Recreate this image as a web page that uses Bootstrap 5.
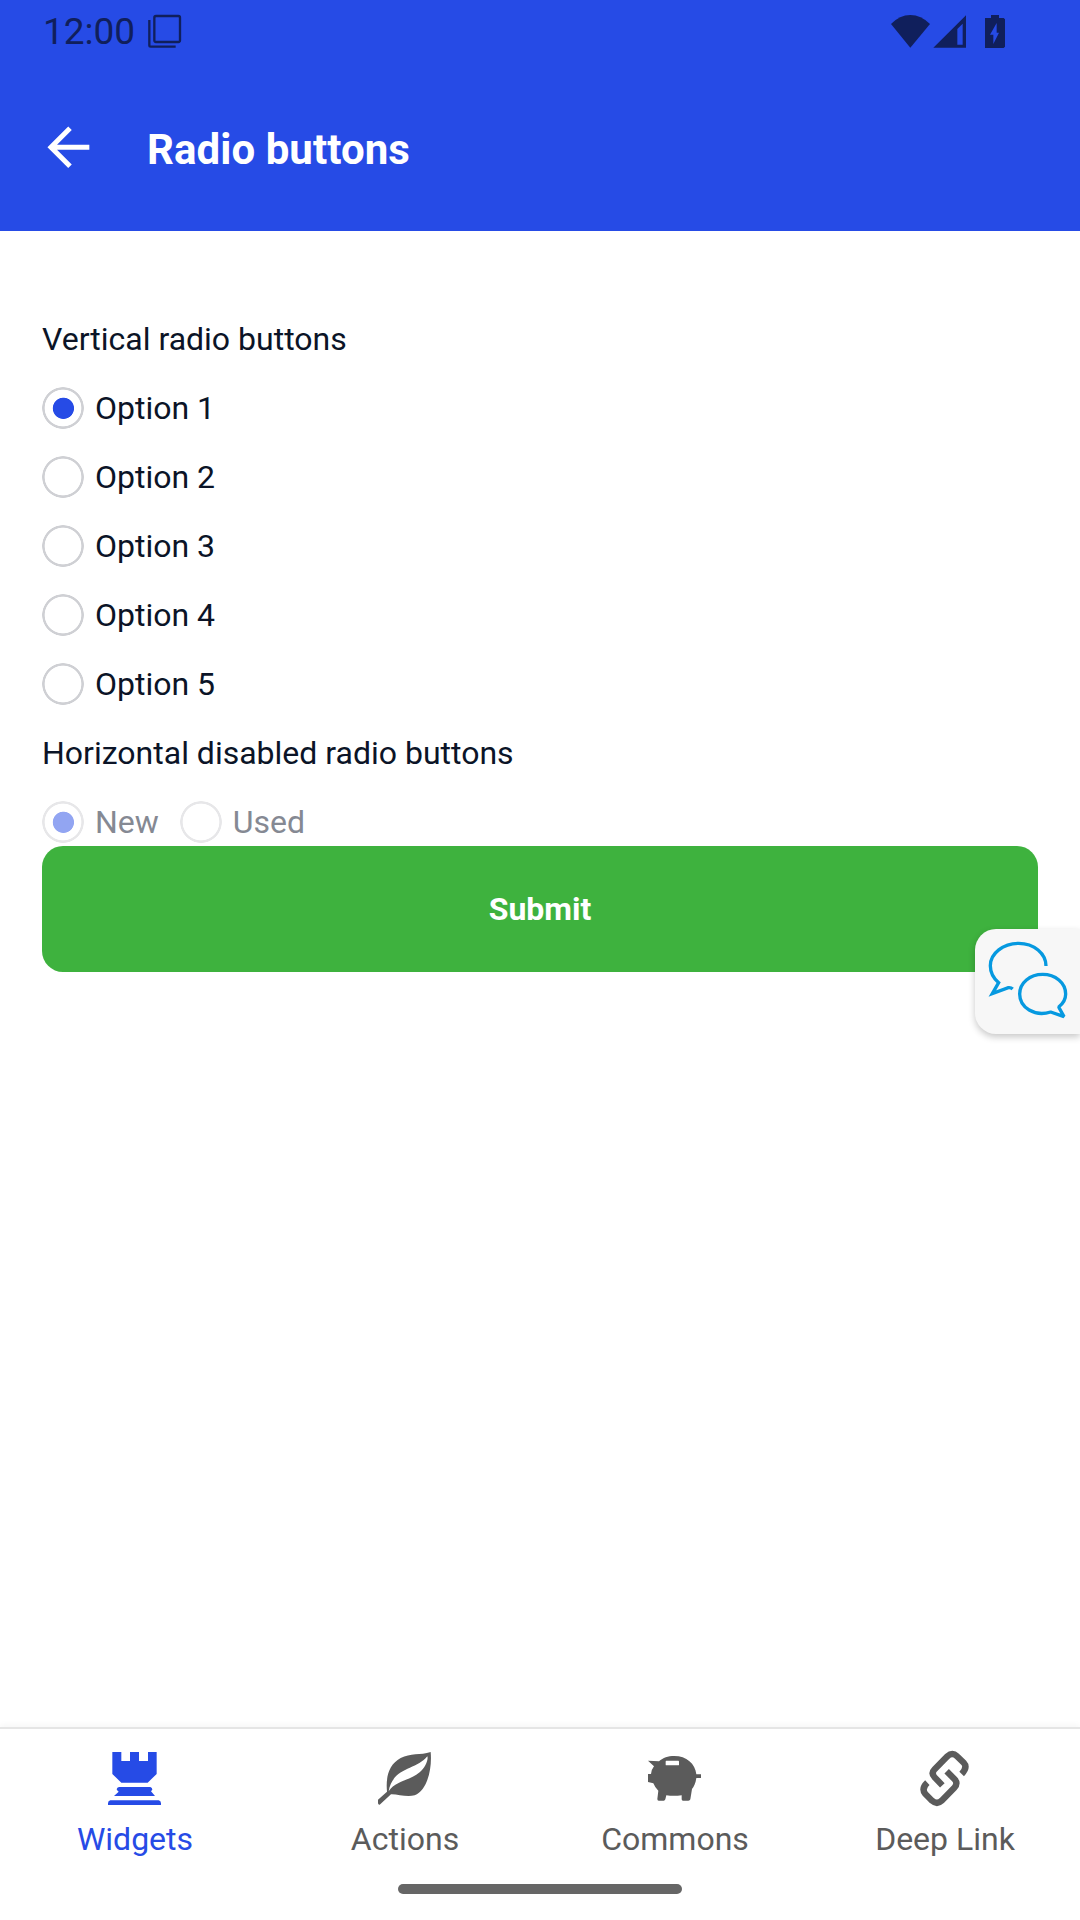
<!DOCTYPE html>
<html lang="en">
<head>
<meta charset="utf-8">
<meta name="viewport" content="width=device-width, initial-scale=1">
<title>Radio buttons</title>
<link rel="stylesheet" href="https://cdn.jsdelivr.net/npm/bootstrap@5.3.0/dist/css/bootstrap.min.css">
<style>
  body { font-family: Roboto, "Liberation Sans", sans-serif; color: #0b1427; background: #fff; font-size: 32px; line-height: 42px; }
  svg { display: block; overflow: visible; flex: none; }
  .app-top { background: #264be6; height: 231px; }
  .status { height: 62px; padding: 0 75px 0 43px; color: #101f5c; font-size: 37px; }
  .status .clock { padding-top: 1px; }
  .status .windows { margin-left: 13px; }
  .toolbar { height: 169px; padding: 4px 0 0 47px; }
  .toolbar .back { margin-top: 60px; }
  .toolbar h1 { font-size: 42px; line-height: 50px; margin: 59px 0 0 56px; letter-spacing: .06px; }
  .form-area { padding: 87px 42px 0; }
  .stack { gap: 27px; }
  .opt { gap: 11px; }
  .opt .form-check-input { --ring: #cfd0d4; --dot: transparent; width: 42px; height: 42px; margin: 0; border: 0; background: radial-gradient(circle at 21.4px 21.3px, var(--dot) 10.2px, transparent 11px), radial-gradient(circle at center, #fff 18px, var(--ring) 18.7px, var(--ring) 20.6px, transparent 21.2px); float: none; flex: none; box-shadow: none; opacity: 1; }
  .opt .form-check-input:checked { --dot: #264be6; }
  .opt.off .form-check-input { --ring: #e7e7e9; }
  .opt.off .form-check-input:checked { --dot: #92a5f2; }
  .opt .form-check-label { opacity: 1 !important; }
  .opt.off .form-check-label { color: #858993; }
  .inline-opts { gap: 21px; }
  .btn-send { height: 126px; margin-top: 3px; padding: 6px 0; border: 0; border-radius: 21px; background: #3eb23e; color: #fff; font-size: 32px; font-weight: 700; }
  .chat-tab { position: absolute; right: 0; top: 929px; width: 105px; height: 105px; background: #f7f7f7; border-radius: 21px 0 0 21px; box-shadow: 0 3px 7px rgba(0,0,0,.22); }
  .tabs { height: 193px; border-top: 2px solid #e5e5e5; box-shadow: 0 -2px 6px rgba(0,0,0,.04); color: #5b5b5b; }
  .tabs a { padding-top: 23px; gap: 12px; color: inherit; }
  .tabs a.on { color: #264be6; }
  .home-bar { width: 284px; height: 10px; border-radius: 5px; background: #666; margin-bottom: 26px; }
</style>
</head>
<body>
<div class="vh-100 d-flex flex-column position-relative overflow-hidden">
  <header class="app-top flex-shrink-0">
    <div class="status d-flex align-items-center">
      <span class="clock">12:00</span>
      <svg class="windows" width="33" height="33" viewBox="446 45 99 99" fill="none" stroke="currentColor" stroke-width="7"><rect x="465" y="48" width="77" height="78" rx="5"/><path d="M450 60V136Q450 140 454 140H529"/></svg>
      <svg class="ms-auto" width="114" height="33" viewBox="93 42 342 99" fill="currentColor">
        <path d="M93 69Q119 42 151 42T210 69L151 140Z"/>
        <path fill-rule="evenodd" d="M318 43V140H220ZM308 68L292 84V131H308Z"/>
        <path fill-rule="evenodd" d="M393 42H417V51H431L435 55V137L431 141H375V51H393ZM410 66L390 101H400V129L417 95H410Z"/>
      </svg>
    </div>
    <div class="toolbar d-flex align-items-start">
      <svg class="back" width="44" height="44" viewBox="142 378 132 132" fill="none" stroke="#fff" stroke-width="15"><path d="M269 442H155M211 385L154 442L211 499"/></svg>
      <h1 class="text-white fw-bold">Radio buttons</h1>
    </div>
  </header>

  <main class="form-area flex-grow-1">
    <form>
      <div class="stack d-flex flex-column">
        <div>Vertical radio buttons</div>
        <div class="opt d-flex align-items-center"><input class="form-check-input" type="radio" name="v" id="v1" checked><label class="form-check-label" for="v1">Option 1</label></div>
        <div class="opt d-flex align-items-center"><input class="form-check-input" type="radio" name="v" id="v2"><label class="form-check-label" for="v2">Option 2</label></div>
        <div class="opt d-flex align-items-center"><input class="form-check-input" type="radio" name="v" id="v3"><label class="form-check-label" for="v3">Option 3</label></div>
        <div class="opt d-flex align-items-center"><input class="form-check-input" type="radio" name="v" id="v4"><label class="form-check-label" for="v4">Option 4</label></div>
        <div class="opt d-flex align-items-center"><input class="form-check-input" type="radio" name="v" id="v5"><label class="form-check-label" for="v5">Option 5</label></div>
        <div>Horizontal disabled radio buttons</div>
        <div class="inline-opts d-flex">
          <div class="opt off d-flex align-items-center"><input class="form-check-input" type="radio" name="h" id="h1" checked disabled><label class="form-check-label" for="h1">New</label></div>
          <div class="opt off d-flex align-items-center"><input class="form-check-input" type="radio" name="h" id="h2" disabled><label class="form-check-label" for="h2">Used</label></div>
        </div>
      </div>
      <button type="button" class="btn btn-send w-100">Submit</button>
    </form>
  </main>

  <div class="chat-tab">
    <svg width="105" height="105" viewBox="105 327 315 315" fill="none" stroke="#0699e0" stroke-width="10"><path d="M318 438C318 401 282 370 236 370C190 370 151 400 151 437C151 458 161 475 176 488L157 521L205 503Q213 502 218 507"/><path stroke-linejoin="bevel" d="M332 576C284 591 239 563 239 522C239 488 270 463 308 463C346 463 377 488 377 522C377 538 369 551 356 561L372 590Z"/></svg>
  </div>

  <nav class="tabs flex-shrink-0 d-flex flex-column justify-content-between align-items-center bg-white">
    <div class="row g-0 w-100 text-center">
      <a class="on col-3 d-flex flex-column align-items-center text-decoration-none" href="#">
        <svg width="54" height="54" viewBox="54 96 162 162" fill="currentColor"><path d="M67 96H94V123H120V96H147V123H174V96H200V162L173 188H94L67 162ZM87 201H181Q187 203 187 209L183 214L195 228H72L86 215Q80 211 80 208Q81 202 87 201ZM61 241H206Q213 242 213 250V255H54V250Q54 242 61 241Z"/></svg>
        <span>Widgets</span>
      </a>
      <a class="col-3 d-flex flex-column align-items-center text-decoration-none" href="#">
        <svg width="54" height="54" viewBox="114 96 162 162" fill="currentColor"><path fill-rule="evenodd" d="M272 96C277 150 260 212 224 226C200 233 173 222 153 223L119 254Q115 255 114 250V239L141 215C137 174 145 134 182 114C211 99 241 106 272 96ZM262 109C229 151 158 141 146 214C166 182 208 183 239 157C255 144 266 119 262 109Z"/></svg>
        <span>Actions</span>
      </a>
      <a class="col-3 d-flex flex-column align-items-center text-decoration-none" href="#">
        <svg width="54" height="54" viewBox="174 96 162 162" fill="currentColor"><path fill-rule="evenodd" d="M174 122L207 124C220 113 233 108 253 108C289 108 316 131 319 163H333V174H319C317 190 311 201 306 207L301 238Q300 242 295 242H279Q275 242 275 238V226Q251 229 229 226L226 238Q225 242 221 242H206Q202 242 202 237L205 212Q195 203 190 190L174 186V162H183Q184 149 192 139ZM229 122Q227 122 227 125V134Q227 136 229 136H265Q267 136 267 134V125Q267 122 265 122Z"/></svg>
        <span>Commons</span>
      </a>
      <a class="col-3 d-flex flex-column align-items-center text-decoration-none" href="#">
        <svg width="54" height="54" viewBox="174 96 162 162" fill="none" stroke="currentColor" stroke-width="19"><path d="M247 196L224 172Q212 160 224 148L262 109Q277 95 291 109L311 128Q324 142 305 162"/><path d="M260 154L283 177Q296 190 283 203L245 242Q231 255 216 242L196 222Q183 206 202 188"/></svg>
        <span>Deep Link</span>
      </a>
    </div>
    <div class="home-bar"></div>
  </nav>
</div>
<script src="https://cdn.jsdelivr.net/npm/bootstrap@5.3.0/dist/js/bootstrap.bundle.min.js"></script>
</body>
</html>
